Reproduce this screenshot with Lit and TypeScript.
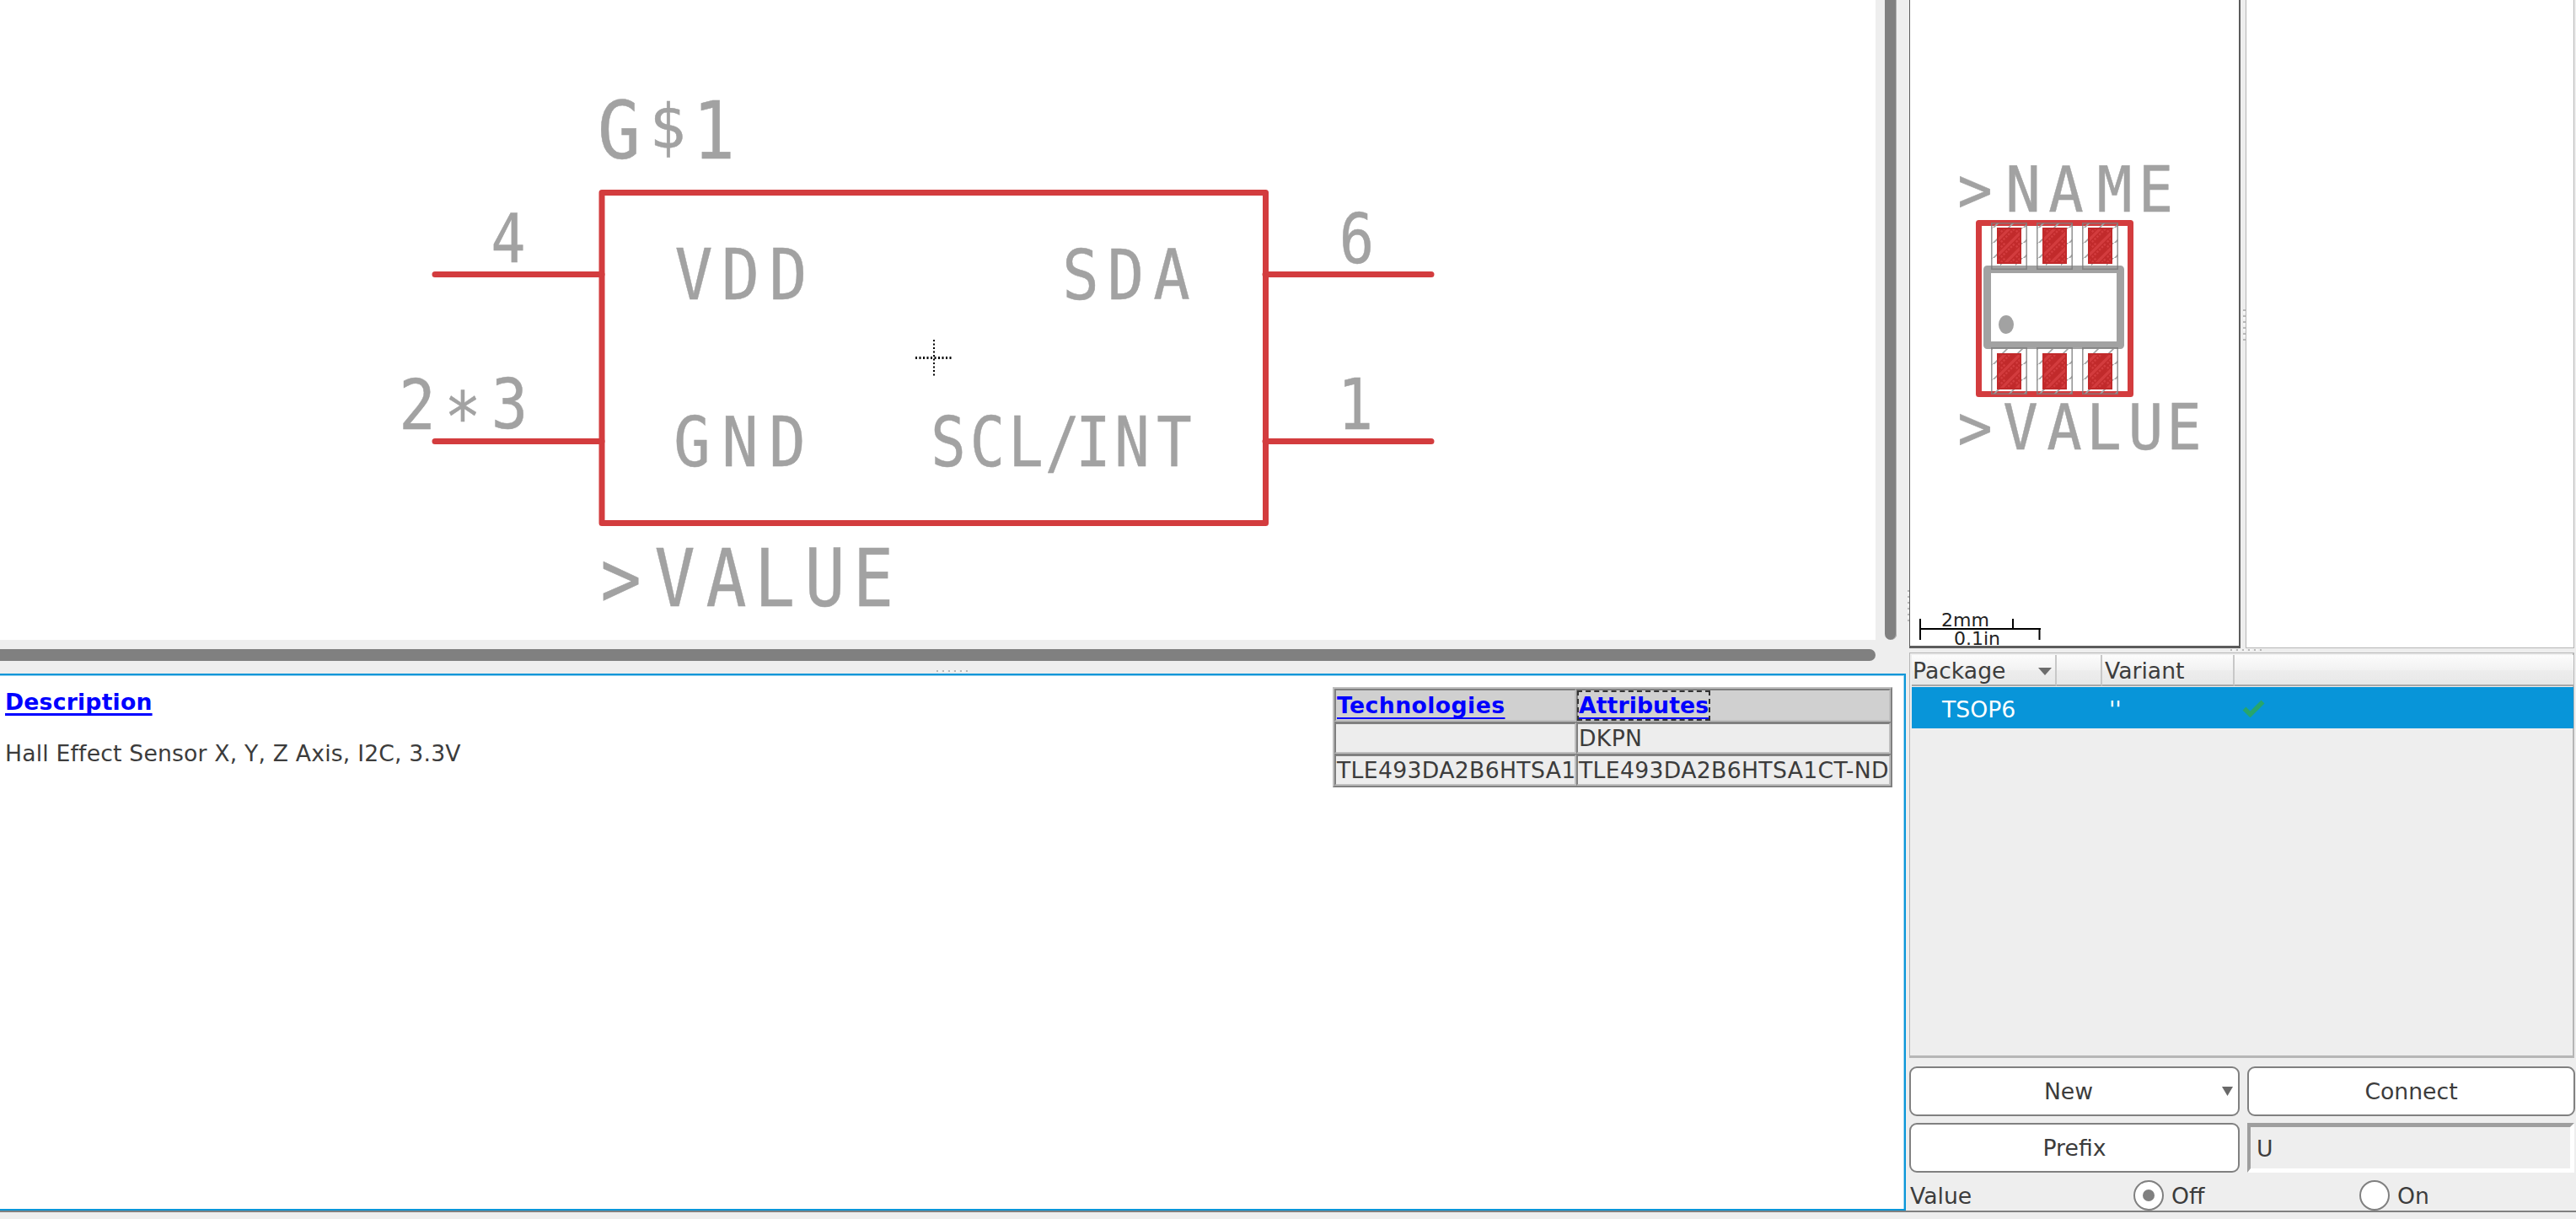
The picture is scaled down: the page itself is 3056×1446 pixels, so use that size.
import { LitElement, html, svg, css } from "lit";
import { customElement } from "lit/decorators.js";

interface Label {
  text: string;
  /** horizontal centre of each character */
  centers: number[];
  baseline: number;
  size: number;
  squeeze: number;
}

const drawLabel = (l: Label) => svg`
  <text class="vec" transform="scale(${l.squeeze} 1)" y=${l.baseline}
    font-size=${l.size} x=${l.centers.map((c) => (c / l.squeeze).toFixed(2)).join(" ")}>${l.text}</text>`;

const vectorText = css`
  .vec {
    font-family: "DejaVu Sans Mono", "Liberation Mono", monospace;
    fill: #a2a2a2;
    stroke: #a2a2a2;
    stroke-width: 0.5;
    text-anchor: middle;
  }
`;

const SYMBOL_LABELS: Label[] = [
  { text: "G", centers: [734.5], baseline: 188.5, size: 94, squeeze: 0.9 },
  { text: "$", centers: [792], baseline: 176, size: 73, squeeze: 0.98 },
  { text: "1", centers: [847], baseline: 188.5, size: 94, squeeze: 0.88 },
  { text: "4", centers: [603], baseline: 311, size: 81, squeeze: 0.84 },
  { text: "VDD", centers: [823, 878.5, 935], baseline: 355.5, size: 83, squeeze: 0.9 },
  { text: "SDA", centers: [1282, 1335.5, 1390], baseline: 355.5, size: 82, squeeze: 0.88 },
  { text: "6", centers: [1609.5], baseline: 312, size: 82, squeeze: 0.84 },
  { text: "1", centers: [1608], baseline: 509, size: 83, squeeze: 0.84 },
  { text: "2", centers: [495], baseline: 509, size: 82, squeeze: 0.88 },
  { text: "*", centers: [549], baseline: 524, size: 82, squeeze: 0.88 },
  { text: "3", centers: [604.5], baseline: 508.5, size: 82, squeeze: 0.88 },
  { text: "GND", centers: [821, 878, 934], baseline: 553.5, size: 82, squeeze: 0.88 },
  { text: "SCL/INT", centers: [1125, 1171.5, 1217, 1260.5, 1297, 1343, 1393], baseline: 553, size: 82, squeeze: 0.84 },
  { text: ">VALUE", centers: [736.5, 800.5, 861.5, 919, 978.5, 1036], baseline: 719.5, size: 94, squeeze: 0.85 },
];

@customElement("symbol-view")
class SymbolView extends LitElement {
  static styles = [
    vectorText,
    css`
      :host { display: block; width: 2225px; height: 759px; background: #fff; }
      svg { display: block; }
      .wire { fill: none; stroke: #d33c3e; stroke-width: 7; stroke-linecap: round; stroke-linejoin: round; }
      .cross { stroke: #000; stroke-dasharray: 2 2.5; }
    `,
  ];
  render() {
    return html`<svg width="2225" height="759" viewBox="0 0 2225 759">
      <rect class="wire" x="714" y="228.5" width="787.5" height="392"></rect>
      <path class="wire" d="M516 325.5H714M516 523.5H714M1501 325.5H1698M1501 523.5H1698"></path>
      ${SYMBOL_LABELS.map(drawLabel)}
      <path class="cross" stroke-width="2" d="M1108 403V446"></path>
      <path class="cross" stroke-width="3" d="M1086 424.5H1129"></path>
    </svg>`;
  }
}

const PACKAGE_LABELS: Label[] = [
  { text: ">NAME", centers: [78, 135, 186, 243.5, 292.5], baseline: 251, size: 75, squeeze: 0.92 },
  { text: ">VALUE", centers: [78, 132, 184, 231, 280.5, 326], baseline: 533, size: 75, squeeze: 0.92 },
];
const PAD_COLUMNS = [97, 151, 205];
const PAD_ROWS = [
  { mask: 264, pad: 270 },
  { mask: 412, pad: 419 },
];

@customElement("package-view")
class PackageView extends LitElement {
  static styles = [
    vectorText,
    css`
      :host {
        display: block; box-sizing: border-box; width: 393px; height: 769px; background: #fff;
        border: solid #5c5c5c; border-width: 0 2px 3px 1px;
      }
      svg { display: block; overflow: visible; }
      .outline { fill: none; stroke: #d33c3e; stroke-width: 7; stroke-linejoin: round; }
      .body { fill: none; stroke: #a2a2a2; stroke-width: 9; stroke-linejoin: round; }
      .mask { stroke: #7d7d7d; stroke-width: 1.6; stroke-opacity: 0.8; }
      .copper { fill: #c12a2b; }
      .dot { fill: #a2a2a2; }
      .ruler { fill: none; stroke: #000; stroke-width: 2; }
      .unit { font: 22px "DejaVu Sans", sans-serif; fill: #222; }
    `,
  ];
  render() {
    return html`<svg width="390" height="766" viewBox="1 0 390 766">
      <defs>
        <pattern id="hatch" width="18" height="18" patternUnits="userSpaceOnUse">
          <path d="M-2 10L10 -2M8 20L20 8" stroke="#a2a2a2" stroke-width="1.6"></path>
        </pattern>
        <pattern id="weave" width="18" height="18" patternUnits="userSpaceOnUse">
          <path d="M-2 14L14 -2M4 26L26 4" stroke="#d33c3e" stroke-width="3.2"></path>
          <path d="M-2 8L8 -2M-2 20L20 -2M10 20L20 10" stroke="#d33c3e" stroke-width="2.4" stroke-dasharray="2.4 1.6"></path>
        </pattern>
      </defs>
      <rect class="outline" x="82.5" y="264.5" width="180" height="203"></rect>
      <rect class="body" x="92.5" y="319.5" width="158" height="90"></rect>
      <ellipse class="dot" cx="115" cy="385" rx="9" ry="11"></ellipse>
      ${PAD_ROWS.map((row) =>
        PAD_COLUMNS.map(
          (x) => svg`
            <rect class="mask" fill="url(#hatch)" x=${x + 0.8} y=${row.mask + 0.8} width="41.4" height="54.4"></rect>
            <rect class="copper" x=${x + 7} y=${row.pad} width="29" height="43"></rect>
            <rect fill="url(#weave)" x=${x + 9} y=${row.pad + 2} width="25" height="39"></rect>`
        )
      )}
      ${PACKAGE_LABELS.map(drawLabel)}
      <text class="unit" x="38" y="743">2mm</text>
      <text class="unit" x="53" y="765">0.1in</text>
      <path class="ruler" d="M13 734V759M12 746H156M123 734V746"></path>
      <path class="ruler" stroke-width="3" d="M154.5 746V759"></path>
    </svg>`;
  }
}

@customElement("description-pane")
class DescriptionPane extends LitElement {
  static styles = css`
    :host {
      display: flex; justify-content: space-between; align-items: flex-start; box-sizing: border-box;
      width: 2261px; height: 637px; background: #fff;
      border: solid #0a96d8; border-width: 2px 2px 2px 0;
      box-shadow: inset -1px 1px #9fd5f0;
      padding: 14px 14px 0 6px;
    }
    a { color: #00f; font-weight: bold; letter-spacing: 0.2px; text-decoration: underline; text-decoration-thickness: 3px; text-underline-offset: 4px; text-decoration-skip-ink: none; cursor: pointer; }
    .text { display: flex; flex-direction: column; gap: 30px; padding-top: 2px; line-height: 31px; letter-spacing: 0.17px; }
    .grid {
      display: grid; grid-template-columns: 287px 373px; grid-template-rows: 39px 37px 37px; gap: 1px 0;
      width: 664px; height: 119px; box-sizing: border-box; background: #808080;
      border: 2px solid; border-color: #bebebe #808080 #808080 #bebebe;
      line-height: 31px; letter-spacing: 0.33px;
    }
    .cell {
      box-sizing: border-box; background: #ededed; overflow: visible; white-space: nowrap;
      border: solid; border-width: 2px; border-color: #808080 #bebebe #bebebe #808080;
      padding: 1px 0 0 1px;
    }
    .head { background: #d0d0d0; padding-top: 2px; }
    .head a { letter-spacing: 0.42px; text-decoration-thickness: 2px; text-underline-offset: 5px; }
    .head a.focus { outline: 2px dashed #333; display: inline-block; height: 32px; letter-spacing: 0.1px; }
  `;
  render() {
    return html`
      <div class="text">
        <div><a>Description</a></div>
        <div>Hall Effect Sensor X, Y, Z Axis, I2C, 3.3V</div>
      </div>
      <div class="grid">
        <div class="cell head"><a>Technologies</a></div>
        <div class="cell head"><a class="focus">Attributes</a></div>
        <div class="cell"></div>
        <div class="cell">DKPN</div>
        <div class="cell">TLE493DA2B6HTSA1</div>
        <div class="cell">TLE493DA2B6HTSA1CT-ND</div>
      </div>`;
  }
}

@customElement("package-table")
class PackageTable extends LitElement {
  static styles = css`
    :host {
      display: block; box-sizing: border-box; width: 789px; height: 481px; background: #eee;
      border: solid #b6b6b6; border-width: 1px 2px 3px 1px; padding: 2px 0 0 2px;
    }
    .row { display: grid; grid-template-columns: 172px 54px 157px 1fr; margin-right: -1px; }
    .header { height: 38px; }
    .col {
      box-sizing: border-box; height: 37px; line-height: 38px; padding-left: 3px;
      background: linear-gradient(#fcfcfc, #f2f2f2 50%, #ededed 51%, #e8e8e8);
      border: solid; border-width: 0 2px 2px 0; border-color: #c8c8c8 #c8c8c8 #a8a8a8;
      display: flex; justify-content: space-between; align-items: flex-start;
    }
    .col:first-child { padding-left: 1px; }
    .col:last-child { border-right-width: 0; }
    .sort { margin: 15px 4px 0 0; }
    .selected { height: 49px; background: #0895d9; color: #fff; line-height: 53px; }
    .package { padding-left: 36px; height: 49px; }
    .variant { padding-left: 8px; height: 49px; }
    .tick { padding: 15px 0 0 9px; line-height: 0; }
  `;
  render() {
    return html`
      <div class="row header">
        <div class="col"><span>Package</span>
          <svg class="sort" width="16" height="9"><path d="M0 0H16L8 9Z" fill="#6c6c6c"></path></svg></div>
        <div class="col"></div>
        <div class="col"><span>Variant</span></div>
        <div class="col"></div>
      </div>
      <div class="row selected">
        <div class="package">TSOP6</div>
        <div></div>
        <div class="variant">''</div>
        <div class="tick">
          <svg width="27" height="21"><path d="M2.5 10.5L9.5 17.5L24.5 2.5" fill="none" stroke="#27a56c" stroke-width="5.5"></path></svg>
        </div>
      </div>`;
  }
}

@customElement("device-controls")
class DeviceControls extends LitElement {
  static styles = css`
    :host { display: flex; flex-direction: column; gap: 9px; width: 790px; }
    .grid { display: grid; grid-template-columns: 392px 389px; grid-template-rows: 59px 59px; gap: 8px 9px; }
    button {
      box-sizing: border-box; border: 2px solid #808080; border-radius: 9px; background: #fff;
      font: inherit; color: inherit; padding: 0; display: grid; grid-template-columns: 20px 1fr 20px; align-items: center;
    }
    .menu { grid-template-columns: 12px 1fr 18px; padding-right: 1px; }
    .caption { grid-column: 2; }
    .menu .caption { padding-right: 7px; }
    .field {
      box-sizing: border-box; width: 388px; padding-left: 7px; line-height: 51px;
      border: solid; border-width: 5px 5px 5px 4px; border-color: #9e9e9e #fff #fff #9e9e9e;
    }
    .value { display: grid; grid-template-columns: 266px 268px 1fr; height: 36px; line-height: 37px; }
    .name { padding-left: 1px; }
    .option { display: flex; gap: 9px; }
    circle { fill: #fff; stroke: #808080; stroke-width: 2; }
    .on { fill: #808080; stroke: none; }
  `;
  render() {
    return html`
      <div class="grid">
        <button class="menu"><span class="caption">New</span><svg width="13" height="11"><path d="M0 0H13L6.5 11Z" fill="#696969"></path></svg></button>
        <button><span class="caption">Connect</span></button>
        <button><span class="caption">Prefix</span></button>
        <div class="field">U</div>
      </div>
      <div class="value">
        <span class="name">Value</span>
        <span class="option"><svg width="36" height="36"><circle cx="18" cy="18" r="17"></circle><circle class="on" cx="18" cy="18" r="7"></circle></svg>Off</span>
        <span class="option"><svg width="36" height="36"><circle cx="18" cy="18" r="17"></circle></svg>On</span>
      </div>`;
  }
}

@customElement("app-root")
class AppRoot extends LitElement {
  static styles = css`
    :host {
      display: block; width: 3056px; height: 1446px; overflow: hidden; background: #eee;
      font: 26.67px "DejaVu Sans", sans-serif; color: #3c3c3c;
    }
    .panes { display: grid; grid-template-columns: 2265px 791px; height: 1436px; }
    .left, .right { display: flex; flex-direction: column; position: relative; }
    .canvas { display: flex; height: 759px; gap: 11px; }
    .vthumb { width: 14px; background: #808080; border-radius: 0 0 7px 7px; box-shadow: inset -1px 0 #b0b0b0; }
    .hbar { height: 29px; padding-top: 11px; }
    .hthumb { width: 2225px; height: 14px; background: #808080; border-radius: 0 7px 7px 0; }
    .previews { display: flex; height: 774px; gap: 6px; align-items: flex-start; }
    .blank { box-sizing: border-box; width: 390px; height: 769px; background: #fff; border: solid #b6b6b6; border-width: 0 1px 1px; }
    package-table { margin-bottom: 10px; }
    .footer { height: 8px; border-top: 2px solid #808080; }
    .grip { position: absolute; }
    .grip.h { width: 37px; height: 2px; background: repeating-linear-gradient(90deg, #b8b8b8 0 2px, #f6f6f6 2px 5px, transparent 5px 7px); }
    .grip.v { width: 3px; height: 37px; background: repeating-linear-gradient(#b8b8b8 0 2px, #f6f6f6 2px 5px, transparent 5px 7px); }
    .g1 { left: 1111px; top: 795px; }
    .g2 { left: 2263px; top: 700px; }
    .g3 { left: 396px; top: 367px; }
    .g4 { left: 381px; top: 770px; }
  `;
  render() {
    return html`
      <div class="panes">
        <div class="left">
          <div class="canvas"><symbol-view></symbol-view><div class="vthumb"></div></div>
          <div class="hbar"><div class="hthumb"></div></div>
          <description-pane></description-pane>
          <i class="grip h g1"></i><i class="grip v g2"></i>
        </div>
        <div class="right">
          <div class="previews"><package-view></package-view><div class="blank"></div></div>
          <package-table></package-table>
          <device-controls></device-controls>
          <i class="grip v g3"></i><i class="grip h g4"></i>
        </div>
      </div>
      <div class="footer"></div>`;
  }
}
